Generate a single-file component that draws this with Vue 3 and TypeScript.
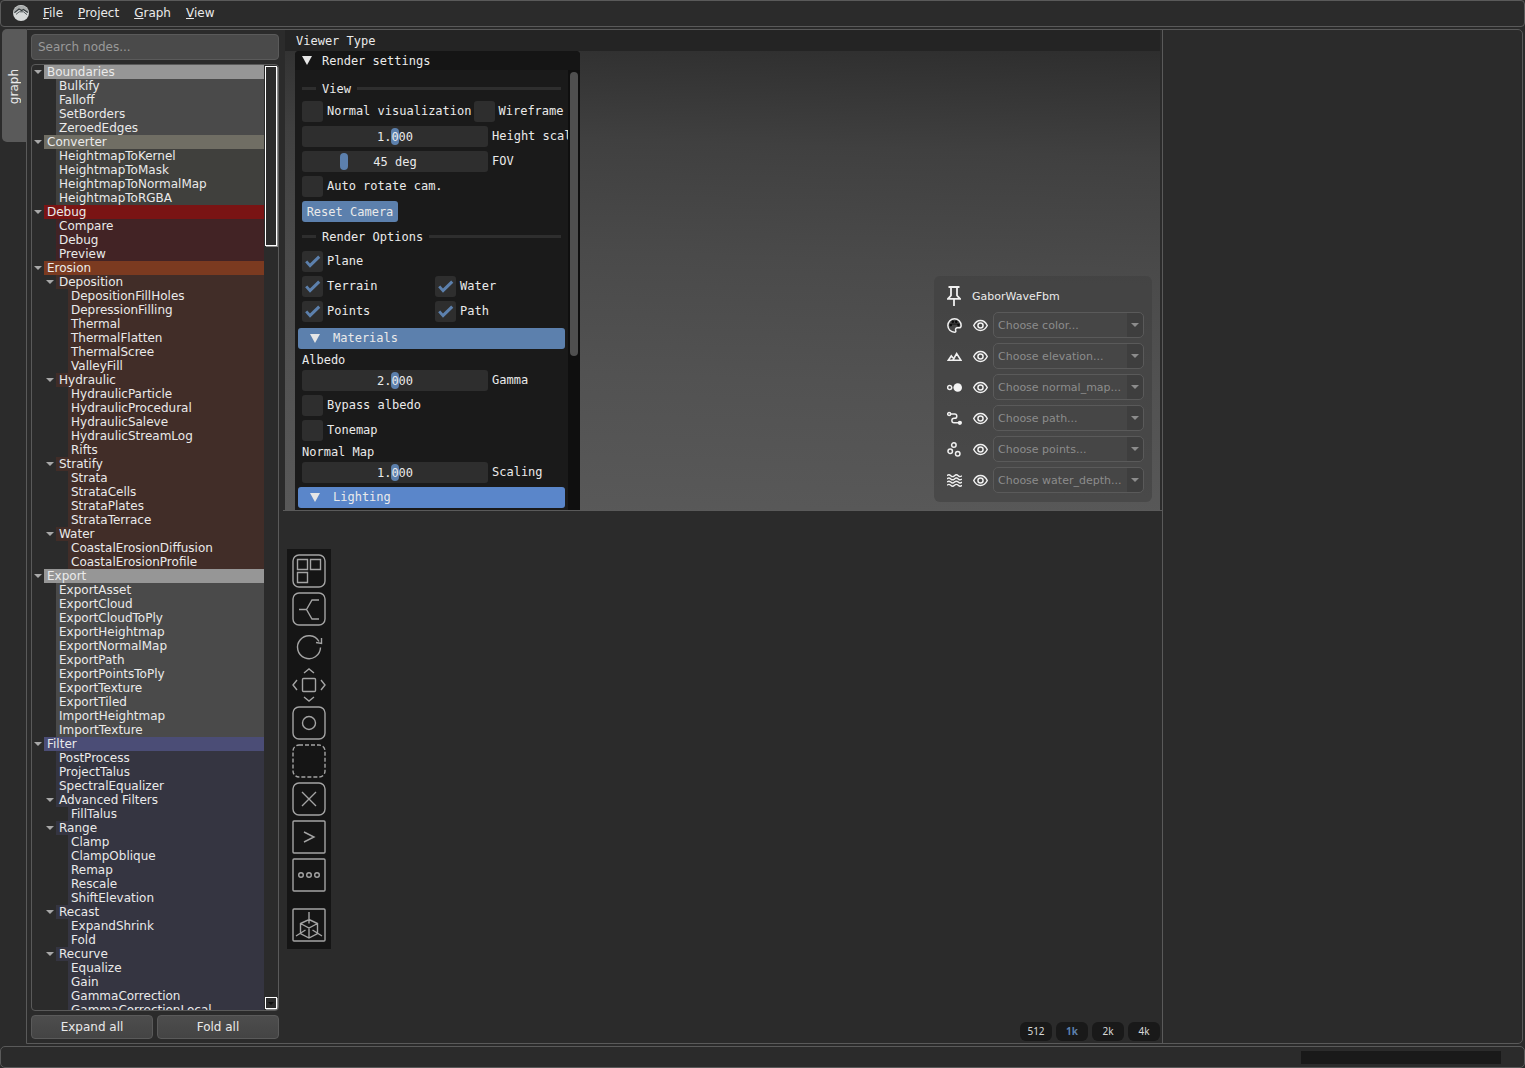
<script setup lang="ts">
import { ref } from 'vue'

interface Group {
  name: string
  items: string[]
}
interface Category {
  name: string
  bar: string
  body: string
  items: string[]
  groups: Group[]
}
interface Row {
  key: string
  label: string
  depth: number
  color: string
  branch: boolean
}

const categories: Category[] = [
  { name: 'Boundaries', bar: '#969696', body: '#4a4a4a', items: ['Bulkify', 'Falloff', 'SetBorders', 'ZeroedEdges'], groups: [] },
  { name: 'Converter', bar: '#706e64', body: '#40403d', items: ['HeightmapToKernel', 'HeightmapToMask', 'HeightmapToNormalMap', 'HeightmapToRGBA'], groups: [] },
  { name: 'Debug', bar: '#7a1414', body: '#422325', items: ['Compare', 'Debug', 'Preview'], groups: [] },
  {
    name: 'Erosion', bar: '#7b3a20', body: '#412d28', items: [],
    groups: [
      { name: 'Deposition', items: ['DepositionFillHoles', 'DepressionFilling', 'Thermal', 'ThermalFlatten', 'ThermalScree', 'ValleyFill'] },
      { name: 'Hydraulic', items: ['HydraulicParticle', 'HydraulicProcedural', 'HydraulicSaleve', 'HydraulicStreamLog', 'Rifts'] },
      { name: 'Stratify', items: ['Strata', 'StrataCells', 'StrataPlates', 'StrataTerrace'] },
      { name: 'Water', items: ['CoastalErosionDiffusion', 'CoastalErosionProfile'] },
    ],
  },
  {
    name: 'Export', bar: '#969696', body: '#4a4a4a',
    items: ['ExportAsset', 'ExportCloud', 'ExportCloudToPly', 'ExportHeightmap', 'ExportNormalMap', 'ExportPath', 'ExportPointsToPly', 'ExportTexture', 'ExportTiled', 'ImportHeightmap', 'ImportTexture'],
    groups: [],
  },
  {
    name: 'Filter', bar: '#4b4d76', body: '#353541', items: ['PostProcess', 'ProjectTalus', 'SpectralEqualizer'],
    groups: [
      { name: 'Advanced Filters', items: ['FillTalus'] },
      { name: 'Range', items: ['Clamp', 'ClampOblique', 'Remap', 'Rescale', 'ShiftElevation'] },
      { name: 'Recast', items: ['ExpandShrink', 'Fold'] },
      { name: 'Recurve', items: ['Equalize', 'Gain', 'GammaCorrection', 'GammaCorrectionLocal'] },
    ],
  },
]

const rows: Row[] = categories.flatMap((c) => [
  { key: c.name, label: c.name, depth: 0, color: c.bar, branch: true },
  ...c.items.map((i) => ({ key: `${c.name}/${i}`, label: i, depth: 1, color: c.body, branch: false })),
  ...c.groups.flatMap((g) => [
    { key: `${c.name}/${g.name}`, label: g.name, depth: 1, color: c.body, branch: true },
    ...g.items.map((i) => ({ key: `${c.name}/${g.name}/${i}`, label: i, depth: 2, color: c.body, branch: false })),
  ]),
])

const menus = ['File', 'Project', 'Graph', 'View']
const channels = ['color', 'elevation', 'normal_map', 'path', 'points', 'water_depth']
const resolutions = ['512', '1k', '2k', '4k']
const resolution = ref('1k')

const search = ref('')
const heightScale = ref(1)
const fov = ref(45)
const gamma = ref(2)
const scaling = ref(1)
</script>

<template>
  <div class="app">
    <header class="menubar">
      <svg class="logo" viewBox="0 0 16 16" aria-hidden="true">
        <circle cx="8" cy="8" r="8" fill="#d6d9d9" />
        <path d="M.2 8.500a7.800 8 0 0 1 15.600 0L11 4.400 8.800 5.600 6.400 4.400 2 8z" fill="#a9acac" />
        <path d="M1.500 7.600L6 4l2.600 1.500L10.500 4.400l4.300 3.200" fill="none" stroke="#33393b" stroke-width="1.200" />
        <path d="M3 9.400l3.200-2.600 4.300 0L14 9.600" fill="none" stroke="#50575a" stroke-width="1" />
      </svg>
      <button v-for="m in menus" :key="m" type="button" class="menu"><u>{{ m[0] }}</u>{{ m.slice(1) }}</button>
    </header>

    <main class="main">
      <nav class="tabs"><button type="button" class="tab"><span>graph</span></button></nav>

      <div class="workspace">
        <aside class="library">
          <input v-model="search" class="search" type="text" placeholder="Search nodes..." aria-label="Search nodes" />
          <div class="tree">
            <ul class="rows">
              <li v-for="r in rows" :key="r.key" class="row" :class="`depth-${r.depth}`">
                <span class="twist"><svg v-if="r.branch" viewBox="0 0 8 4" aria-hidden="true"><path d="M0 0h8L4 4z" fill="#a8a8a8" /></svg></span>
                <span class="label" :style="{ background: r.color }">{{ r.label }}</span>
              </li>
            </ul>
            <div class="scroll">
              <div class="scroll-thumb"></div>
              <button type="button" class="scroll-down" aria-label="Scroll down"><svg viewBox="0 0 6 3"><path d="M0 0h6L3 3z" fill="#101010" /></svg></button>
            </div>
          </div>
          <div class="fold">
            <button type="button">Expand all</button>
            <button type="button">Fold all</button>
          </div>
        </aside>

        <section class="center">
          <div class="viewer">
            <div class="viewer-menu">Viewer Type</div>
            <div class="viewer-body">
              <div class="settings">
                <div class="settings-title"><svg class="tri" viewBox="0 0 10 9"><path d="M0 0h10L5 9z" fill="#e6e6e6" /></svg>Render settings</div>
                <div class="settings-main">
                  <div class="fields">
                    <div class="sep">View</div>
                    <div class="line">
                      <label class="check"><input type="checkbox" />Normal visualization</label>
                      <label class="check"><input type="checkbox" />Wireframe</label>
                    </div>
                    <label class="slide"><span class="track"><input v-model.number="heightScale" type="range" min="0" max="2" step="0.001" /><output>{{ heightScale.toFixed(3) }}</output></span>Height scale</label>
                    <label class="slide"><span class="track"><input v-model.number="fov" type="range" min="10" max="180" /><output>{{ fov }} deg</output></span>FOV</label>
                    <label class="check"><input type="checkbox" />Auto rotate cam.</label>
                    <button type="button" class="reset">Reset Camera</button>
                    <div class="sep roomy">Render Options</div>
                    <label class="check"><input type="checkbox" checked />Plane</label>
                    <div class="pair">
                      <label class="check"><input type="checkbox" checked />Terrain</label>
                      <label class="check"><input type="checkbox" checked />Water</label>
                    </div>
                    <div class="pair">
                      <label class="check"><input type="checkbox" checked />Points</label>
                      <label class="check"><input type="checkbox" checked />Path</label>
                    </div>
                    <button type="button" class="section first"><svg class="tri" viewBox="0 0 10 9"><path d="M0 0h10L5 9z" fill="#e6e6e6" /></svg>Materials</button>
                    <div class="caption">Albedo</div>
                    <label class="slide"><span class="track"><input v-model.number="gamma" type="range" min="0" max="4" step="0.001" /><output>{{ gamma.toFixed(3) }}</output></span>Gamma</label>
                    <label class="check"><input type="checkbox" />Bypass albedo</label>
                    <label class="check"><input type="checkbox" />Tonemap</label>
                    <div class="caption">Normal Map</div>
                    <label class="slide"><span class="track"><input v-model.number="scaling" type="range" min="0" max="2" step="0.001" /><output>{{ scaling.toFixed(3) }}</output></span>Scaling</label>
                    <button type="button" class="section hot"><svg class="tri" viewBox="0 0 10 9"><path d="M0 0h10L5 9z" fill="#e6e6e6" /></svg>Lighting</button>
                  </div>
                  <div class="gutter"><div class="gutter-thumb"></div></div>
                </div>
              </div>

              <div class="channels">
                <div class="pinned">
                  <svg class="pin" viewBox="0 0 14 20" fill="none" stroke="#f0f0f0" stroke-width="1.800"><path d="M1.500 1h11M4 1v8.500L1 12.800h12L10 9.500V1M7 12.500V20" /></svg>
                  <span>GaborWaveFbm</span>
                </div>
                <div v-for="c in channels" :key="c" class="channel">
                  <svg class="glyph" viewBox="0 0 14 14" fill="none" stroke="#f0f0f0" stroke-width="1.400" aria-hidden="true">
                    <template v-if="c === 'color'">
                      <path d="M7 .8a6.200 6.200 0 1 0 0 12.400c1.200 0 1.500-.9 1.100-1.800-.5-1.200.2-2.200 1.500-2.200h1.600c1.200 0 2-.9 2-2.200C13.200 3.400 10.400.8 7 .8z" />
                      <g fill="#0c0c0c" stroke="none"><circle cx="3.500" cy="6.600" r="1.300" /><circle cx="5.400" cy="3.600" r="1.300" /><circle cx="8.600" cy="3.600" r="1.300" /><circle cx="10.700" cy="6.400" r="1.300" /><path d="M4 5h6v1.500H4z" opacity=".5" /></g>
                    </template>
                    <path v-else-if="c === 'elevation'" stroke-width="1.500" d="M5.500 10.500L9 4.200l4 6.300zM5.500 10.500H1.200l2.800-4 1.600 2" />
                    <template v-else-if="c === 'normal_map'"><circle cx="2.500" cy="7" r="1.900" /><circle cx="10" cy="7" r="4" fill="#f4f4f4" stroke="none" /></template>
                    <template v-else-if="c === 'path'"><circle cx="2" cy="2.800" r="1.400" /><path d="M3.500 2.800h3.700c2.600 0 2.600 4 0 4H6.500c-2.600 0-2.600 4.200 0 4.200h4" /><circle cx="12" cy="11" r="2" fill="#f4f4f4" stroke="none" /></template>
                    <template v-else-if="c === 'points'"><circle cx="6.400" cy="2.900" r="2.100" /><circle cx="3" cy="8.600" r="2.100" /><circle cx="10" cy="11" r="2.100" /></template>
                    <path v-else stroke-width="1.300" d="M0 2.500c1.200-1.200 2.300-1.200 3.500 0s2.300 1.200 3.500 0 2.300-1.200 3.500 0 2.300 1.200 3.500 0M0 5.500c1.200-1.200 2.300-1.200 3.500 0s2.300 1.200 3.500 0 2.300-1.200 3.500 0 2.300 1.200 3.500 0M0 8.500c1.200-1.200 2.300-1.200 3.500 0s2.300 1.200 3.500 0 2.300-1.200 3.500 0 2.300 1.200 3.500 0M0 11.500c1.200-1.200 2.300-1.200 3.500 0s2.300 1.200 3.500 0 2.300-1.200 3.500 0 2.300 1.200 3.500 0" />
                  </svg>
                  <svg class="glyph" viewBox="0 0 14 14" fill="none" stroke="#f0f0f0" stroke-width="1.400" aria-hidden="true"><path d="M.7 7C2.200 3.900 4.500 2.300 7 2.300S11.800 3.900 13.300 7C11.800 10.100 9.500 11.700 7 11.700S2.200 10.100.7 7z" /><circle cx="7" cy="7" r="2.400" /></svg>
                  <span class="combo">
                    <select :aria-label="c" disabled><option>Choose {{ c }}...</option></select>
                    <svg viewBox="0 0 8 4" aria-hidden="true"><path d="M0 0h8L4 4z" fill="#8c8c8c" /></svg>
                  </span>
                </div>
              </div>
            </div>
          </div>

          <div class="graph">
            <div class="tools">
              <button type="button" aria-label="New node"><svg viewBox="0 0 34 34"><rect x="1" y="1" width="32" height="32" rx="6" /><path d="M5.500 5.500h10v10h-10zM18.500 5.500h10v10h-10zM5.500 18.500h10v10h-10z" /></svg></button>
              <button type="button" aria-label="Link style"><svg viewBox="0 0 34 34"><rect x="1" y="1" width="32" height="32" rx="6" /><path d="M7 17.500h7.500M14.500 17.500L20 8h7M14.500 17.500L20 27h7" /></svg></button>
              <button type="button" aria-label="Reload"><svg viewBox="0 0 34 34"><path d="M27 11.500A11.500 11.500 0 1 0 28.500 17.500M29.500 8v5.500l-5.500-1" /></svg></button>
              <button type="button" aria-label="Fit view"><svg viewBox="0 0 34 34"><rect x="10.500" y="10.500" width="13" height="13" rx="1" /><path d="M12 5l5-4 5 4M12 29l5 4 5-4M5 12l-4 5 4 5M29 12l4 5-4 5" /></svg></button>
              <button type="button" aria-label="Center view"><svg viewBox="0 0 34 34"><rect x="1" y="1" width="32" height="32" rx="6" /><circle cx="17" cy="17" r="6.500" /></svg></button>
              <button type="button" aria-label="Select all"><svg viewBox="0 0 34 34"><rect x="1" y="1" width="32" height="32" rx="6" stroke-dasharray="4 2" /></svg></button>
              <button type="button" aria-label="Clear"><svg viewBox="0 0 34 34"><rect x="1" y="1" width="32" height="32" rx="6" /><path d="M10 10l14 14M24 10L10 24" /></svg></button>
              <button type="button" aria-label="Console"><svg viewBox="0 0 34 34"><rect x="1" y="1" width="32" height="32" rx="1" /><path d="M12 12l10 5-10 5" /></svg></button>
              <button type="button" aria-label="More"><svg viewBox="0 0 34 34"><rect x="1" y="1" width="32" height="32" rx="1" /><circle cx="9" cy="17" r="2.300" /><circle cx="17" cy="17" r="2.300" /><circle cx="25" cy="17" r="2.300" /></svg></button>
              <button type="button" class="apart" aria-label="Toggle 3D view"><svg viewBox="0 0 34 34"><rect x="1" y="1" width="32" height="32" rx="1" /><path d="M17 11.500l8.500 4v10L17 30l-8.500-4.500v-10zM8.500 15.500L17 20l8.500-4.500M17 20v10M17 4v11.500M4 28l9.500-6M30 28l-9.500-6" /></svg></button>
            </div>
            <div class="sizes">
              <button v-for="s in resolutions" :key="s" type="button" :class="{ on: s === resolution }" @click="resolution = s">{{ s }}</button>
            </div>
          </div>
        </section>

        <aside class="properties"></aside>
      </div>
    </main>

    <footer class="status"><div class="progress"></div></footer>
  </div>
</template>

<style>
html,
body {
  background: #2b2b2b;
}
</style>

<style scoped>
.app {
  display: flex;
  flex-direction: column;
  height: 100vh;
  overflow: hidden;
  background: #2b2b2b;
  color: #eaeaea;
  font: 12px/14px "DejaVu Sans", sans-serif;
}
.app * {
  box-sizing: border-box;
}
button {
  margin: 0;
  padding: 0;
  border: 0;
  background: none;
  color: inherit;
  font: inherit;
}
svg {
  display: block;
  flex: none;
}

.menubar {
  display: flex;
  align-items: center;
  height: 27px;
  padding: 0 12px 2px;
  border: 1px solid #5a5a5a;
  border-radius: 4px;
}
.logo {
  width: 16px;
  height: 16px;
  margin-right: 14px;
}
.menu {
  margin-right: 15px;
}

.main {
  display: flex;
  flex: 1;
  min-height: 0;
  margin-top: 2px;
}
.tabs {
  width: 26px;
  padding-left: 2px;
}
.tab {
  width: 24px;
  height: 113px;
  padding-top: 5px;
  border-radius: 5px 0 0 5px;
  background: #5a5a5a;
}
.tab span {
  writing-mode: vertical-rl;
  transform: rotate(180deg);
}
.workspace {
  display: flex;
  flex: 1;
  min-width: 0;
  margin-right: 2px;
  border: 1px solid #5a5a5a;
  border-radius: 0 5px 5px 0;
}

.library {
  display: flex;
  flex-direction: column;
  gap: 4px;
  width: 256px;
  padding: 4px;
}
.search {
  height: 26px;
  padding: 0 6px;
  border: 1px solid #5a5a5a;
  border-radius: 4px;
  outline: 0;
  background: #4a4a4a;
  color: #eaeaea;
  font: inherit;
}
.search::placeholder {
  color: #999;
}
.tree {
  display: flex;
  flex: 1;
  min-height: 0;
  border: 1px solid #5a5a5a;
  border-radius: 4px;
  overflow: hidden;
}
.rows {
  flex: 1;
  margin: 0;
  padding: 0;
  list-style: none;
}
.row {
  display: flex;
  height: 14px;
}
.depth-1 {
  padding-left: 12px;
}
.depth-2 {
  padding-left: 24px;
}
.twist {
  display: flex;
  align-items: center;
  width: 12px;
  padding-left: 2px;
}
.twist svg {
  width: 8px;
  height: 4px;
}
.label {
  flex: 1;
  padding-left: 3px;
}
.scroll {
  display: flex;
  flex-direction: column;
  justify-content: space-between;
  width: 14px;
  padding: 1px;
}
.scroll-thumb,
.scroll-down {
  border: 1px solid #fff;
  box-shadow: 1px 1px 0 #8a8a8a;
}
.scroll-thumb {
  height: 180px;
}
.scroll-down {
  display: grid;
  place-items: center;
  height: 12px;
}
.scroll-down svg {
  width: 6px;
  height: 3px;
}
.fold {
  display: flex;
  gap: 4px;
}
.fold button {
  flex: 1;
  height: 24px;
  border: 1px solid #5a5a5a;
  border-radius: 4px;
  background: linear-gradient(#4d4d4d, #444);
}

.center {
  display: flex;
  flex: 879;
  flex-direction: column;
  min-width: 0;
  border-right: 1px solid #5a5a5a;
}
.properties {
  flex: 359;
}
.viewer {
  display: flex;
  flex-direction: column;
  height: 481px;
  padding: 0 2px;
  border-bottom: 1px solid #5a5a5a;
  font: 12px/14px "DejaVu Sans Mono", monospace;
}
.viewer-menu {
  height: 21px;
  padding: 4px 11px 0;
  background: #242424;
}
.viewer-body {
  display: flex;
  flex: 1;
  align-items: flex-end;
  justify-content: space-between;
  min-height: 0;
  padding: 0 8px 0 10px;
  background: linear-gradient(182deg, #2e2e2e, #404040 22%, #4a4a4a 45%, #525252 70%, #595959);
}
.settings {
  display: flex;
  flex-direction: column;
  align-self: stretch;
  width: 285px;
  border-radius: 4px 4px 0 0;
  background: #1a1a1a;
  overflow: hidden;
}
.settings-title {
  display: flex;
  align-items: center;
  height: 19px;
  padding-left: 7px;
  background: #151515;
}
.tri {
  width: 10px;
  height: 9px;
}
.settings-title .tri {
  margin-right: 10px;
}
.settings-main {
  display: flex;
  flex: 1;
  min-height: 0;
}
.fields {
  display: flex;
  flex: 1;
  flex-direction: column;
  gap: 4px;
  min-width: 0;
  padding: 10px 7px 0;
  overflow: hidden;
  white-space: nowrap;
}
.fields > * {
  flex: none;
}
.sep {
  display: flex;
  align-items: center;
  gap: 6px;
  height: 17px;
}
.sep::before,
.sep::after {
  content: "";
  width: 14px;
  height: 3px;
  background: #2e2e2e;
}
.sep::after {
  flex: 1;
}
.roomy {
  margin: 2px 0;
}
.line {
  display: flex;
  gap: 2px;
}
.pair {
  display: grid;
  grid-template-columns: 133px 1fr;
}
.caption {
  height: 13px;
}
.check {
  display: flex;
  align-items: center;
  gap: 4px;
  height: 21px;
  line-height: 15px;
}
.check input {
  flex: none;
  appearance: none;
  width: 21px;
  height: 21px;
  margin: 0;
  border-radius: 3px;
  background: #2e2e2e;
}
.check input:checked::before {
  content: "";
  display: block;
  height: 100%;
  background: #5c80ad;
  clip-path: polygon(15% 54%, 25% 45%, 38% 60%, 77% 21%, 87% 32%, 38% 80%);
}
.slide {
  display: flex;
  align-items: center;
  gap: 4px;
  height: 21px;
  line-height: 15px;
}
.track {
  position: relative;
  flex: none;
  width: 186px;
  height: 21px;
}
.track input {
  appearance: none;
  display: block;
  width: 100%;
  height: 21px;
  margin: 0;
  padding: 0 2px;
  border-radius: 3px;
  background: #2e2e2e;
}
.track input::-webkit-slider-thumb {
  appearance: none;
  width: 8px;
  height: 17px;
  border-radius: 4px;
  background: #5c80ad;
}
.track output {
  position: absolute;
  inset: 4px 0 0;
  text-align: center;
  pointer-events: none;
}
.reset {
  align-self: flex-start;
  width: 96px;
  height: 21px;
  padding-top: 1px;
  border-radius: 3px;
  background: #5c80ad;
}
.section {
  display: flex;
  align-items: center;
  gap: 13px;
  height: 21px;
  margin: 0 -4px;
  padding-left: 12px;
  border-radius: 3px;
  background: #5c80ad;
  line-height: 15px;
}
.first {
  margin-top: 2px;
}
.hot {
  background: #5a86ca;
}
.gutter {
  width: 12px;
  padding: 2px;
  background: #0f0f0f;
}
.gutter-thumb {
  width: 8px;
  height: 284px;
  border-radius: 4px;
  background: #4f4f4f;
}

.channels {
  display: flex;
  flex-direction: column;
  gap: 5px;
  width: 218px;
  margin-bottom: 8px;
  padding: 9px 8px 9px 13px;
  border-radius: 6px;
  background: rgba(64, 64, 64, 0.6);
  font: 11px/14px "DejaVu Sans", sans-serif;
}
.pinned {
  display: flex;
  align-items: center;
  gap: 11px;
  height: 22px;
}
.pinned span {
  padding-top: 1px;
}
.pin {
  width: 14px;
  height: 20px;
}
.channel {
  display: flex;
  align-items: center;
  height: 26px;
}
.glyph {
  width: 15px;
  height: 15px;
  margin-right: 11px;
}
.glyph + .glyph {
  margin-right: 5px;
}
.combo {
  position: relative;
  flex: 1;
}
.combo select {
  appearance: none;
  display: block;
  width: 100%;
  height: 26px;
  padding: 1px 4px 0;
  border: 1px solid #5a5a5a;
  border-radius: 5px;
  background: linear-gradient(to right, transparent 133px, #3e3e3e 133px) #464646;
  color: #8c8c8c;
  font: inherit;
  opacity: 1;
}
.combo svg {
  position: absolute;
  top: 11px;
  right: 5px;
  width: 8px;
  height: 4px;
}

.graph {
  display: flex;
  flex: 1;
  flex-direction: column;
  justify-content: space-between;
  align-items: flex-start;
  padding: 38px 2px 2px 4px;
}
.tools {
  display: flex;
  flex-direction: column;
  gap: 4px;
  padding: 5px 5px 7px;
  background: #151515;
}
.tools svg {
  width: 34px;
  height: 34px;
  fill: none;
  stroke: #a4a4a4;
  stroke-width: 1.4;
}
.apart {
  margin-top: 12px;
}
.sizes {
  display: flex;
  align-self: flex-end;
  gap: 4px;
}
.sizes button {
  width: 32px;
  height: 19px;
  border-radius: 6px;
  background: #191919;
  color: #d8d8d8;
  font: 10px/19px "Noto Sans", sans-serif;
}
.sizes .on {
  color: #5c80ad;
  font-weight: bold;
}

.status {
  display: flex;
  justify-content: flex-end;
  height: 22px;
  margin-top: 2px;
  padding: 4px 23px 0;
  border: 1px solid #5a5a5a;
  border-radius: 5px;
}
.progress {
  width: 200px;
  height: 13px;
  background: #191919;
}
</style>
